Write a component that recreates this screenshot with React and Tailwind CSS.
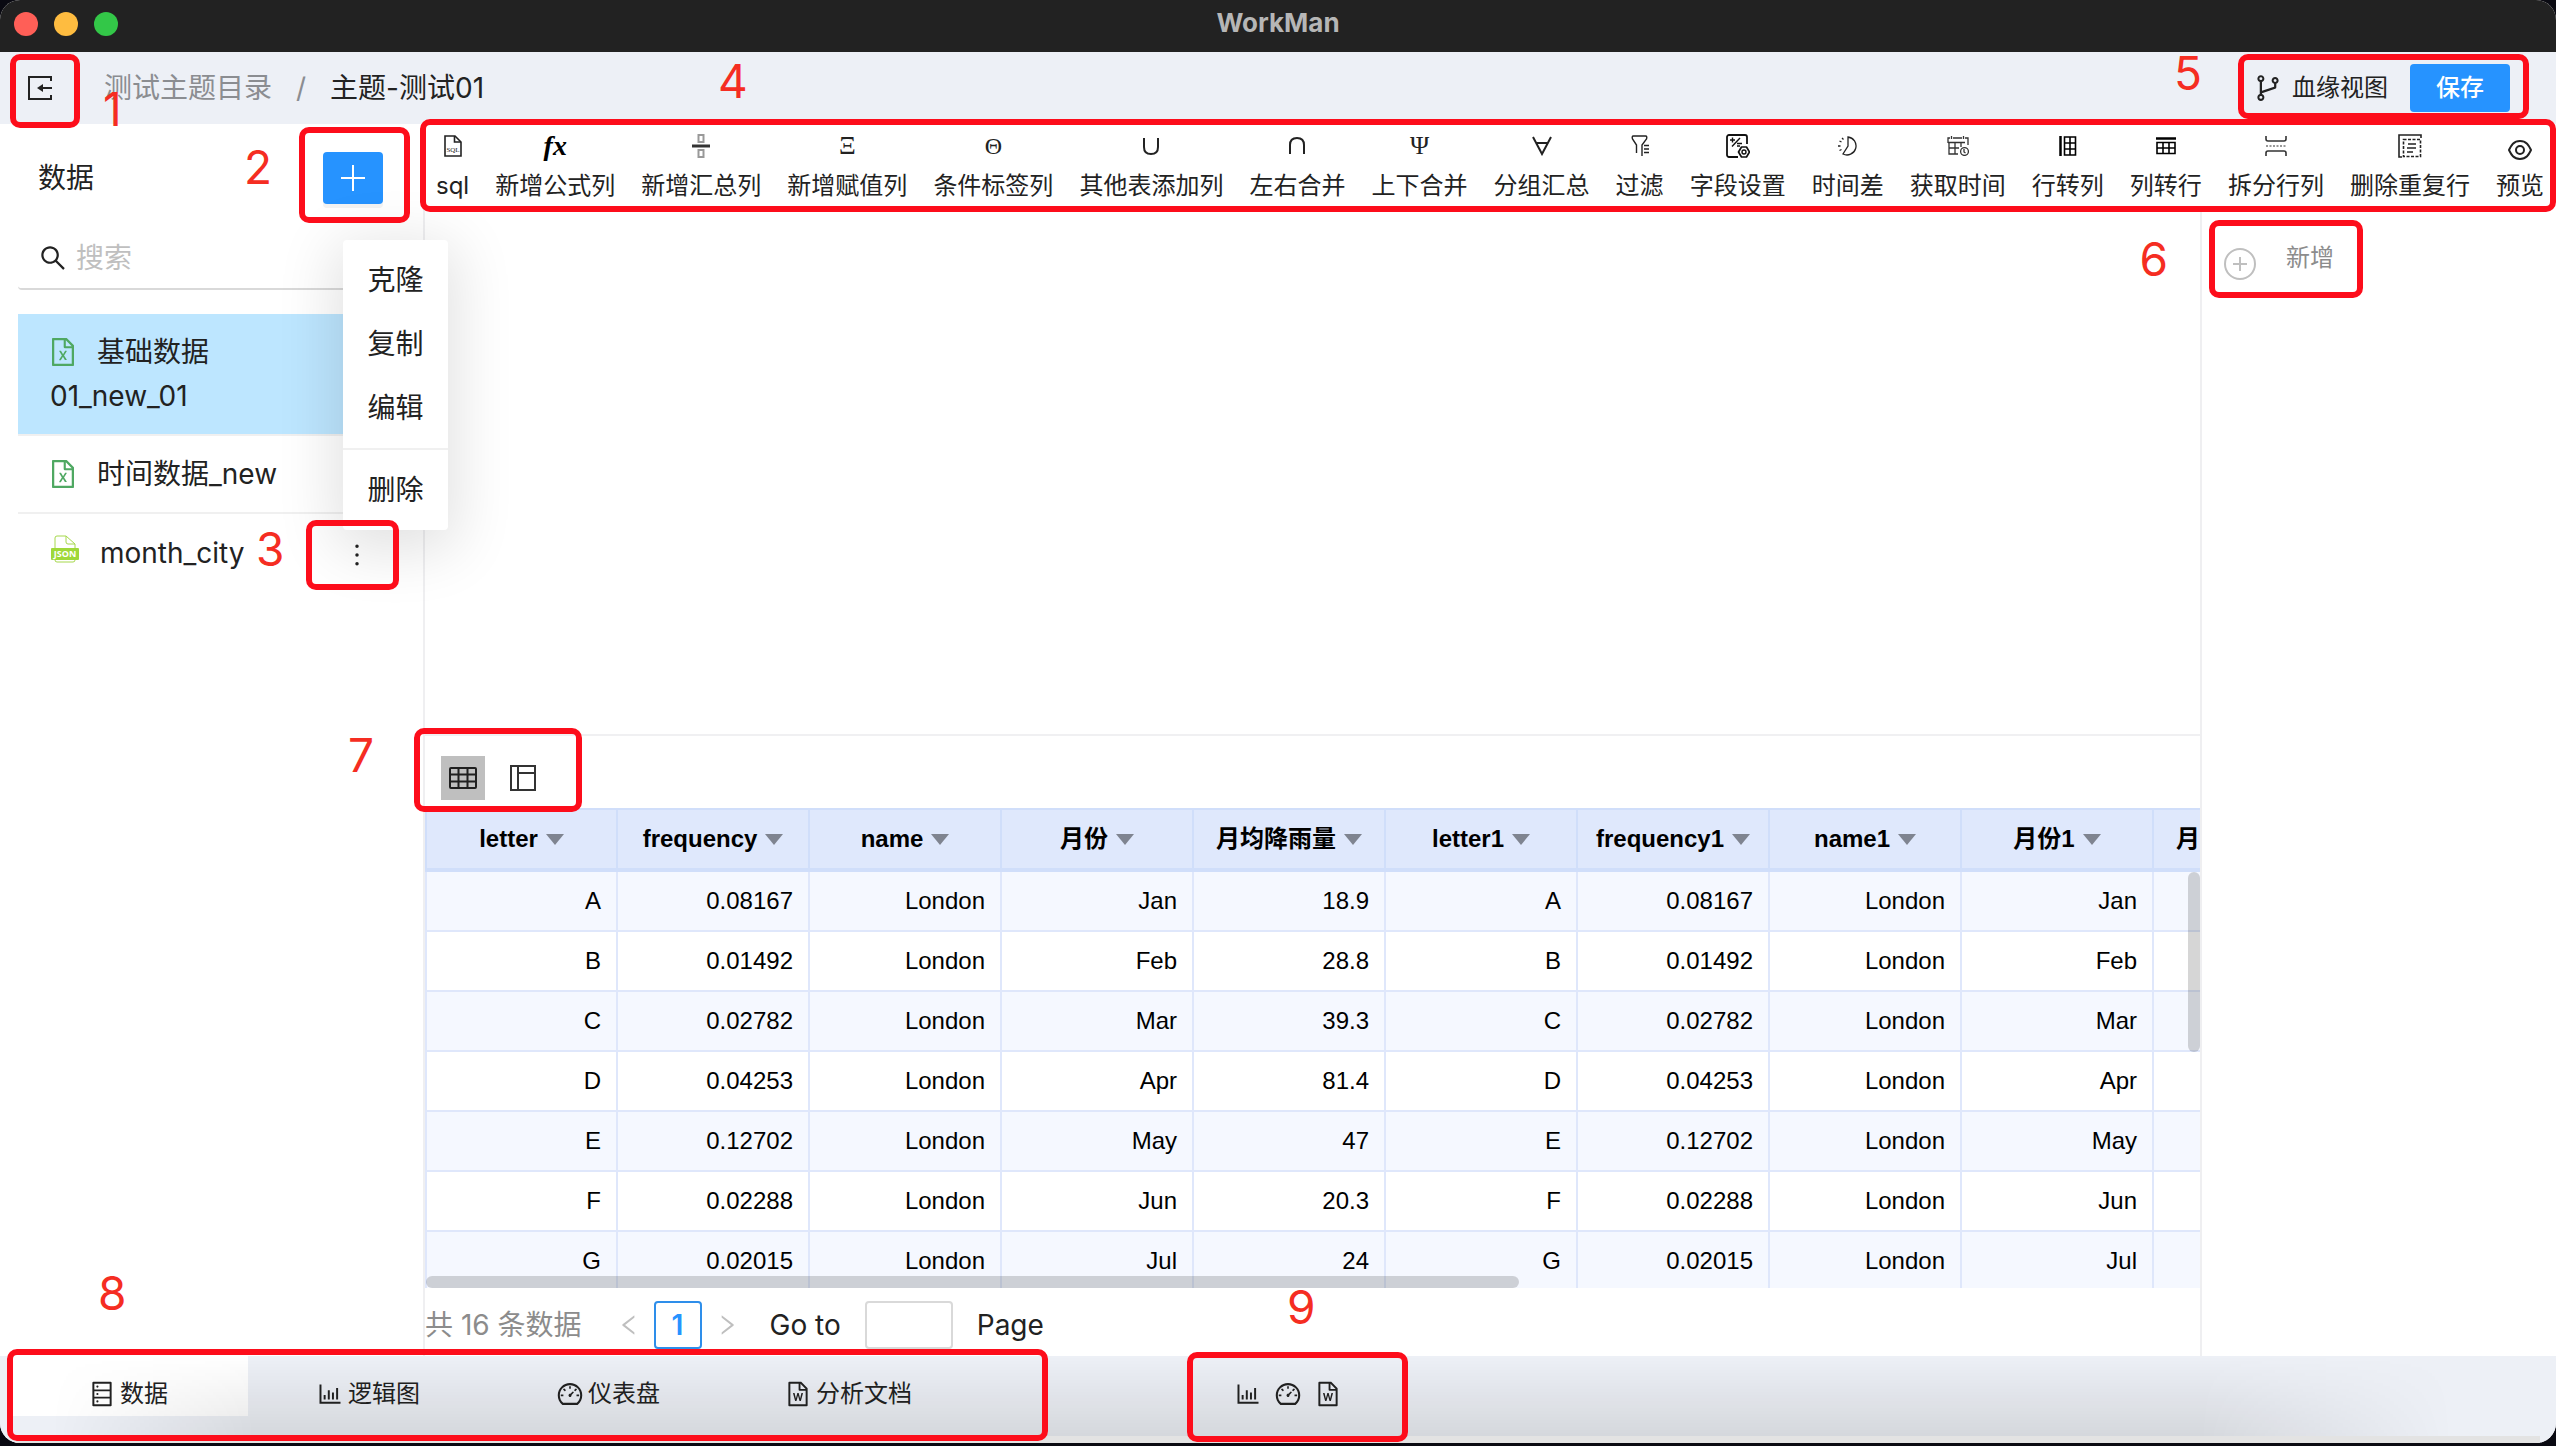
import React from 'react';
import {
  AiOutlineBarChart,
  AiOutlineBranches,
  AiOutlineDashboard,
  AiOutlineDatabase,
  AiOutlineFileExcel,
  AiOutlineFileWord,
  AiOutlineLeft,
  AiOutlineMore,
  AiOutlineRight,
  AiOutlineSearch,
} from 'react-icons/ai';

const serif = "font-['Liberation_Serif',serif] leading-none";

function BackIcon() {
  return (
    <svg width="26" height="26" viewBox="0 0 26 26" fill="none" stroke="#222" strokeWidth="2">
      <path d="M24 6V2H2v22h22v-4M25 13H14" />
      <path d="M10 13l6-4v8z" fill="#222" stroke="none" />
    </svg>
  );
}

function SqlIcon() {
  return (
    <svg width="18" height="22" viewBox="0 0 18 22" fill="none" stroke="#222" strokeWidth="1.6">
      <path d="M1 1h10l6 6v14H1z" />
      <path d="M10.500 1v6H17" />
      <text x="9" y="17" textAnchor="middle" fontSize="7" fontFamily="Liberation Serif" stroke="none" fill="#222">SQL</text>
    </svg>
  );
}

function SummaryIcon() {
  return (
    <svg width="18" height="24" viewBox="0 0 18 24" fill="none">
      <path d="M6.500 1h5v7h-5zM6.500 16h5v7h-5z" stroke="#999" strokeWidth="2" />
      <path d="M0 12h18" stroke="#333" strokeWidth="3" />
    </svg>
  );
}

function CupIcon({ flip }) {
  return (
    <svg width="16" height="18" viewBox="0 0 16 18" fill="none" stroke="#222" strokeWidth="2">
      {flip ? <path d="M1 17V8c0-4 2-7 7-7s7 3 7 7v9" /> : <path d="M1 1v9c0 4 2 7 7 7s7-3 7-7V1" />}
    </svg>
  );
}

function ForAllIcon() {
  return (
    <svg width="20" height="20" viewBox="0 0 20 20" fill="none" stroke="#222" strokeWidth="2">
      <path d="M1 1l9 17 9-17M4 7h12" />
    </svg>
  );
}

function FilterIcon() {
  return (
    <svg width="18" height="22" viewBox="0 0 18 22" fill="none" stroke="#222" strokeWidth="1.4">
      <path d="M5.500 18v-8L1.500 4C1 2.500 1 1 2.500 1h12c1.500 0 1.500 1.500 1 3l-4.500 6v11" />
      <path d="M13 10.500h5M13 14h5M13 17.500h5" />
    </svg>
  );
}

function FieldIcon() {
  return (
    <svg width="24" height="24" viewBox="0 0 24 24" fill="none" stroke="#111" strokeWidth="1.8">
      <path d="M12 23H3a2 2 0 0 1-2-2V3a2 2 0 0 1 2-2h16a2 2 0 0 1 2 2v7" />
      <path d="M4 6h5M6.500 3.500v5M14 4L6 12.500M11 9.500h5M11 12h3" strokeWidth="1.4" />
      <path d="M15.500 13h5l3 5-3 5h-5l-3-5z" strokeWidth="1.7" strokeLinejoin="round" />
      <circle cx="18" cy="18" r="2" strokeWidth="1.4" />
    </svg>
  );
}

function TimeDiffIcon() {
  return (
    <svg width="20" height="20" viewBox="0 0 20 20" fill="none" stroke="#222" strokeWidth="1.3">
      <path d="M10 1a9 9 0 1 1-5 17l5-8z" />
      <path d="M5.500 3.500L4 2M3.500 6L1.500 5M2.500 10H0M3.500 13.500l-2 1" />
    </svg>
  );
}

function GetTimeIcon() {
  return (
    <svg width="22" height="20" viewBox="0 0 22 20" fill="none" stroke="#333" strokeWidth="1.3">
      <path d="M11 18H2V7M1 7V2h2M6 2h9M18 2h3v7M1 6.500h17M2 12h10M8 7v11M14 7v4M4.500 0v3M16.500 0v3" />
      <circle cx="17.500" cy="15.500" r="3.900" />
      <path d="M17 13v3l1.500 1" />
    </svg>
  );
}

function RowToColIcon() {
  return (
    <svg width="18" height="20" viewBox="0 0 18 20" fill="none" stroke="#000">
      <path d="M1.500 0v20" strokeWidth="2.5" />
      <path d="M5.500 1h11v18h-11zM11 1v18M5.500 7h11M5.500 13h11" strokeWidth="1.6" />
    </svg>
  );
}

function ColToRowIcon() {
  return (
    <svg width="20" height="18" viewBox="0 0 20 18" fill="none" stroke="#000">
      <path d="M0 1.500h20" strokeWidth="2.5" />
      <path d="M1 5.500h18v11H1zM7 5.500v11M13 5.500v11M1 11h18" strokeWidth="1.6" />
    </svg>
  );
}

function SplitIcon() {
  return (
    <svg width="22" height="22" viewBox="0 0 22 22" fill="none" stroke="#333" strokeWidth="1.6">
      <path d="M1 1v3a2 2 0 0 0 2 2h16a2 2 0 0 0 2-2V1M1 21v-3a2 2 0 0 1 2-2h16a2 2 0 0 1 2 2v3" />
      <path d="M1 11h20" strokeWidth="1.2" strokeDasharray="2 1.500" />
    </svg>
  );
}

function DedupeIcon() {
  return (
    <svg width="24" height="24" viewBox="0 0 24 24" fill="none" stroke="#222" strokeWidth="1.6">
      <path d="M4 23H1V1h22v3" />
      <path d="M5.500 5.500h17v17h-17z" strokeDasharray="3 1.500" />
      <path d="M10 10h8M9 14h9M9 18h6" />
    </svg>
  );
}

function EyeIcon() {
  return (
    <svg width="24" height="20" viewBox="0 0 24 20" fill="none" stroke="#222" strokeWidth="2">
      <path d="M1 10c2-4 4-9 11-9s9 5 11 9c-2 4-4 9-11 9S3 14 1 10z" />
      <circle cx="12" cy="10" r="4" />
    </svg>
  );
}

function GridIcon() {
  return (
    <svg width="28" height="22" viewBox="0 0 28 22" fill="none" stroke="#1f1f1f" strokeWidth="2">
      <rect x="1" y="1" width="26" height="20" rx="1" />
      <path d="M1 7.500h26M1 14.500h26M9.500 1v20M18.500 1v20" />
    </svg>
  );
}

function PivotIcon() {
  return (
    <svg width="26" height="26" viewBox="0 0 26 26" fill="none" stroke="#333" strokeWidth="2">
      <path d="M1 1h24v24H1zM8 1v24M8 8h17" />
    </svg>
  );
}

function JsonIcon() {
  return (
    <svg width="28" height="28" viewBox="0 0 28 28" fill="none" className="mt-1">
      <path d="M4 13V3a2 2 0 0 1 2-2h9l9 8v4M15 1v6a2 2 0 0 0 2 2h7M4 24v1a2 2 0 0 0 2 2h16a2 2 0 0 0 2-2v-1" stroke="#a6d84c" />
      <rect x="0" y="13" width="28" height="12" rx="1" fill="#9fd83a" />
      <text x="14" y="22" textAnchor="middle" fontSize="9" fontWeight="700" fontFamily="Open Sans" fill="#fff">JSON</text>
    </svg>
  );
}

const tools = [
  { label: 'sql', icon: <SqlIcon /> },
  { label: '新增公式列', icon: <span className={`${serif} text-[28px] font-bold italic text-black`}>fx</span> },
  { label: '新增汇总列', icon: <SummaryIcon /> },
  { label: '新增赋值列', icon: <span className={`${serif} text-[26px]`}>Ξ</span> },
  { label: '条件标签列', icon: <span className={`${serif} text-2xl`}>Θ</span> },
  { label: '其他表添加列', icon: <CupIcon /> },
  { label: '左右合并', icon: <CupIcon flip /> },
  { label: '上下合并', icon: <span className={`${serif} text-[26px]`}>Ψ</span> },
  { label: '分组汇总', icon: <ForAllIcon /> },
  { label: '过滤', icon: <FilterIcon /> },
  { label: '字段设置', icon: <FieldIcon /> },
  { label: '时间差', icon: <TimeDiffIcon /> },
  { label: '获取时间', icon: <GetTimeIcon /> },
  { label: '行转列', icon: <RowToColIcon /> },
  { label: '列转行', icon: <ColToRowIcon /> },
  { label: '拆分行列', icon: <SplitIcon /> },
  { label: '删除重复行', icon: <DedupeIcon /> },
  { label: '预览', icon: <span className="pt-2"><EyeIcon /></span> },
];

const columns = ['letter', 'frequency', 'name', '月份', '月均降雨量', 'letter1', 'frequency1', 'name1', '月份1', '月均降雨量'];

const rows = [
  ['A', '0.08167', 'London', 'Jan', '18.9'],
  ['B', '0.01492', 'London', 'Feb', '28.8'],
  ['C', '0.02782', 'London', 'Mar', '39.3'],
  ['D', '0.04253', 'London', 'Apr', '81.4'],
  ['E', '0.12702', 'London', 'May', '47'],
  ['F', '0.02288', 'London', 'Jun', '20.3'],
  ['G', '0.02015', 'London', 'Jul', '24'],
];

const tabs = [
  { label: '数据', icon: AiOutlineDatabase, active: true },
  { label: '逻辑图', icon: AiOutlineBarChart },
  { label: '仪表盘', icon: AiOutlineDashboard },
  { label: '分析文档', icon: AiOutlineFileWord },
];

// Numbered callouts drawn on top of the window
const marks = [
  { n: 1, box: 'left-[10px] top-[54px] w-[70px] h-[74px]', num: 'left-[103px] top-[84px]' },
  { n: 2, box: 'left-[299px] top-[127px] w-[111px] h-[96px]', num: 'left-[244px] top-[142px]' },
  { n: 3, box: 'left-[306px] top-[520px] w-[93px] h-[70px]', num: 'left-[256px] top-[524px]' },
  { n: 4, box: 'left-[420px] right-0 top-[119px] h-[93px]', num: 'left-[718px] top-[56px]' },
  { n: 5, box: 'right-[27px] top-[54px] w-[291px] h-[65px]', num: 'right-[354px] top-[48px]' },
  { n: 6, box: 'right-[193px] top-[220px] w-[154px] h-[78px]', num: 'right-[388px] top-[234px]' },
  { n: 7, box: 'left-[414px] bottom-[634px] w-[168px] h-[84px]', num: 'left-[348px] bottom-[666px]' },
  { n: 8, box: 'left-[7px] bottom-[5px] w-[1041px] h-[92px]', num: 'left-[98px] bottom-[128px]' },
  { n: 9, box: 'left-[1187px] bottom-[4px] w-[221px] h-[90px]', num: 'left-[1287px] bottom-[114px]' },
];

function TitleBar() {
  return (
    <div className="relative flex h-[52px] items-center gap-4 bg-[#222] px-[14px] pb-1">
      <span className="size-6 rounded-full bg-[#ff5f57]" />
      <span className="size-6 rounded-full bg-[#febc40]" />
      <span className="size-6 rounded-full bg-[#33c748]" />
      <h1 className="absolute inset-x-0 top-[7px] text-center text-[26px] leading-8 font-bold text-[#b6b6b6]">WorkMan</h1>
    </div>
  );
}

function Header() {
  return (
    <header className="flex h-[72px] items-center bg-[#edf0f6] pr-[46px] pb-px pl-[27px]">
      <button type="button" aria-label="返回">
        <BackIcon />
      </button>
      <nav className="ml-[51px] flex items-center text-[28px] leading-10">
        <a href="#catalog" className="text-[#8b8d91]">测试主题目录</a>
        <span className="mx-6 text-[#8b8d91]">/</span>
        <span>主题-测试01</span>
      </nav>
      <div className="ml-auto flex items-center text-2xl">
        <button type="button" className="flex items-center gap-2">
          <AiOutlineBranches size={32} />
          血缘视图
        </button>
        <button type="button" className="ml-[22px] h-12 w-[100px] rounded bg-[#2693ff] font-medium text-white">保存</button>
      </div>
    </header>
  );
}

function Sidebar() {
  return (
    <aside className="relative w-[425px] shrink-0 border-r-2 border-[#efeff1] pl-[18px]">
      <div className="flex items-center justify-between pt-7 pr-10 pl-5">
        <h2 className="text-[28px] leading-[44px]">数据</h2>
        <button type="button" aria-label="新建" className="flex h-[52px] w-[60px] items-center justify-center rounded bg-[#2693ff] shadow-[0_4px_0_#f3f3f3]">
          <svg width="24" height="26" viewBox="0 0 24 26" stroke="#fff" strokeWidth="2">
            <path d="M12 0v26M0 13h24" />
          </svg>
        </button>
      </div>
      <label className="mt-6 mr-[18px] flex h-[62px] items-center gap-2 rounded border-b-2 border-[#d9d9d9] pl-5">
        <AiOutlineSearch size={30} />
        <input type="text" aria-label="搜索" placeholder="搜索" className="w-60 text-[28px] leading-10 outline-none placeholder:text-[#bfbfbf]" />
      </label>
      <ul className="mt-6 mr-[18px] text-[28px] leading-[44px]">
        <li className="border-b-2 border-[#f0f0f0] bg-[#bde6ff] py-4 pl-8">
          <AiOutlineFileExcel size={32} className="mr-[18px] -ml-[3px] inline-block align-[-6px] text-[#4fa862]" />
          基础数据
          <br />
          01_new_01
        </li>
        <li className="border-b-2 border-[#f0f0f0] py-4 pl-8">
          <AiOutlineFileExcel size={32} className="mr-[18px] -ml-[3px] inline-block align-[-6px] text-[#4fa862]" />
          时间数据_new
        </li>
        <li className="flex pt-[17px] pr-8 pb-4 pl-[33px]">
          <JsonIcon />
          <span className="ml-[21px]">month_city</span>
          <button type="button" aria-label="更多" className="ml-auto pt-1">
            <AiOutlineMore size={32} />
          </button>
        </li>
      </ul>
      <div role="menu" className="absolute top-[116px] left-[343px] z-10 flex w-[105px] flex-col rounded bg-white py-2 text-[28px] shadow-[0_12px_60px_8px_rgba(0,0,0,0.12)]">
        <button type="button" role="menuitem" className="h-16">克隆</button>
        <button type="button" role="menuitem" className="h-16">复制</button>
        <button type="button" role="menuitem" className="h-16">编辑</button>
        <hr className="my-2 border-t-2 border-[#f0f0f0]" />
        <button type="button" role="menuitem" className="h-16">删除</button>
      </div>
    </aside>
  );
}

function Toolbar() {
  return (
    <div className="flex h-[88px] justify-between pt-2 pr-3 pl-[436px]">
      {tools.map((t) => (
        <button key={t.label} type="button" className="flex flex-col items-center gap-[10px] text-2xl whitespace-nowrap">
          <span className="flex h-7 items-center">{t.icon}</span>
          <span className="leading-8">{t.label}</span>
        </button>
      ))}
    </div>
  );
}

function DataTable() {
  return (
    <div className="relative h-[480px] overflow-hidden font-['Liberation_Sans','Noto_Sans_CJK_SC',sans-serif] text-2xl text-black">
      <table className="w-[1921px] table-fixed border-separate border-spacing-0">
        <thead>
          <tr className="h-16">
            {columns.map((c, i) => (
              <th key={i} className="border-t-2 border-r-2 border-b-4 border-[#d0defa] bg-[#dfe8fc] p-0 font-bold first:w-[193px] first:border-l-2">
                <span className="flex items-center justify-center gap-2 whitespace-nowrap">
                  {c}
                  <svg width="18" height="11" viewBox="0 0 18 11" fill="#7f8490"><path d="M0 0h18l-9 11z" /></svg>
                </span>
              </th>
            ))}
          </tr>
        </thead>
        <tbody>
          {rows.map((r) => (
            <tr key={r[0]} className="h-[60px] odd:bg-[#f5f8ff]">
              {[...r, ...r].map((v, i) => (
                <td key={i} className="border-r-2 border-b-2 border-[#dfe7fb] py-0 pr-[15px] text-right first:border-l-2">{i === 9 ? '' : v}</td>
              ))}
            </tr>
          ))}
        </tbody>
      </table>
      <div className="absolute bottom-0 left-px h-3 w-[1093px] rounded-full bg-black/16" />
      <div className="absolute top-16 right-0 h-[180px] w-3 rounded-full bg-black/16" />
    </div>
  );
}

function Pagination() {
  return (
    <div className="flex h-[68px] items-center pt-2 pb-0.5 text-[28px]">
      <span className="text-[#8c8c8c]">共 16 条数据</span>
      <button type="button" aria-label="上一页" className="ml-[34px] text-[#bfbfbf]"><AiOutlineLeft size={26} /></button>
      <button type="button" className="mx-3 size-12 rounded border-2 border-[#2e8eea] font-semibold text-[#2693ff]">1</button>
      <button type="button" aria-label="下一页" className="text-[#bfbfbf]"><AiOutlineRight size={26} /></button>
      <label htmlFor="page" className="ml-[30px]">Go to</label>
      <input id="page" type="text" className="mx-6 h-12 w-[88px] rounded border-2 border-[#d9d9d9]" />
      <span>Page</span>
    </div>
  );
}

function BottomBar() {
  return (
    <footer className="relative flex h-[87px] bg-[#edf0f6] pl-2 text-2xl">
      {tabs.map((t) => (
        <button key={t.label} type="button" className={`flex h-[60px] w-60 items-center justify-center gap-1 pt-4 ${t.active ? 'bg-white' : ''}`}>
          <t.icon size={28} />
          {t.label}
        </button>
      ))}
      <div className="ml-[266px] flex h-[60px] items-center gap-3 pt-4">
        <button type="button" aria-label="逻辑图"><AiOutlineBarChart size={28} /></button>
        <button type="button" aria-label="仪表盘"><AiOutlineDashboard size={28} /></button>
        <button type="button" aria-label="分析文档"><AiOutlineFileWord size={28} /></button>
      </div>
      <div className="pointer-events-none absolute inset-x-0 top-0 h-20 bg-linear-to-b from-black/0 to-black/10 [mask-image:linear-gradient(to_right,transparent_2%,black_10%,black_86%,transparent_96%)]" />
      <div className="absolute inset-x-4 bottom-0 h-[7px] bg-[#e3e3e3]" />
    </footer>
  );
}

export default function App() {
  return (
    <div className="relative h-screen overflow-hidden bg-[#0a0a12] pb-[3px] font-['Inter','Noto_Sans_CJK_SC',sans-serif] text-[#222]">
      <div className="flex h-full flex-col overflow-hidden rounded-[20px] bg-white">
        <TitleBar />
        <Header />
        <div className="relative flex min-h-0 flex-1">
          <Sidebar />
          <div className="-ml-[425px] flex min-w-0 flex-1 flex-col">
            <Toolbar />
            <div className="flex min-h-0 flex-1 pl-[425px]">
              <main className="flex min-w-0 flex-1 flex-col">
                <section className="flex-1 border-b-2 border-[#f0f0f2]" />
                <div className="flex h-[72px] items-center gap-4 px-4 pt-3">
                  <button type="button" aria-label="表格" className="flex size-11 items-center justify-center bg-[#bfbfbf]"><GridIcon /></button>
                  <button type="button" aria-label="透视表" className="flex size-11 items-center justify-center"><PivotIcon /></button>
                </div>
                <DataTable />
                <Pagination />
              </main>
              <aside className="w-[356px] shrink-0 border-l-2 border-[#efeff1] pt-7 pl-[22px]">
                <button type="button" className="flex items-start gap-[30px] text-2xl text-[#8c8c8c]">
                  <svg width="32" height="32" viewBox="0 0 32 32" fill="none" stroke="#bfbfbf" strokeWidth="2" className="mt-2">
                    <circle cx="16" cy="16" r="15" />
                    <path d="M16 9v14M9 16h14" />
                  </svg>
                  <span className="leading-9">新增</span>
                </button>
              </aside>
            </div>
          </div>
        </div>
        <BottomBar />
      </div>
      {marks.map((m) => (
        <div key={m.n} className="pointer-events-none">
          <div className={`absolute z-20 rounded-[10px] border-[6px] border-[#fd0d1b] ${m.box}`} />
          <span className={`absolute z-20 text-[46px] leading-[50px] text-[#f52d22] ${m.num}`}>{m.n}</span>
        </div>
      ))}
    </div>
  );
}
